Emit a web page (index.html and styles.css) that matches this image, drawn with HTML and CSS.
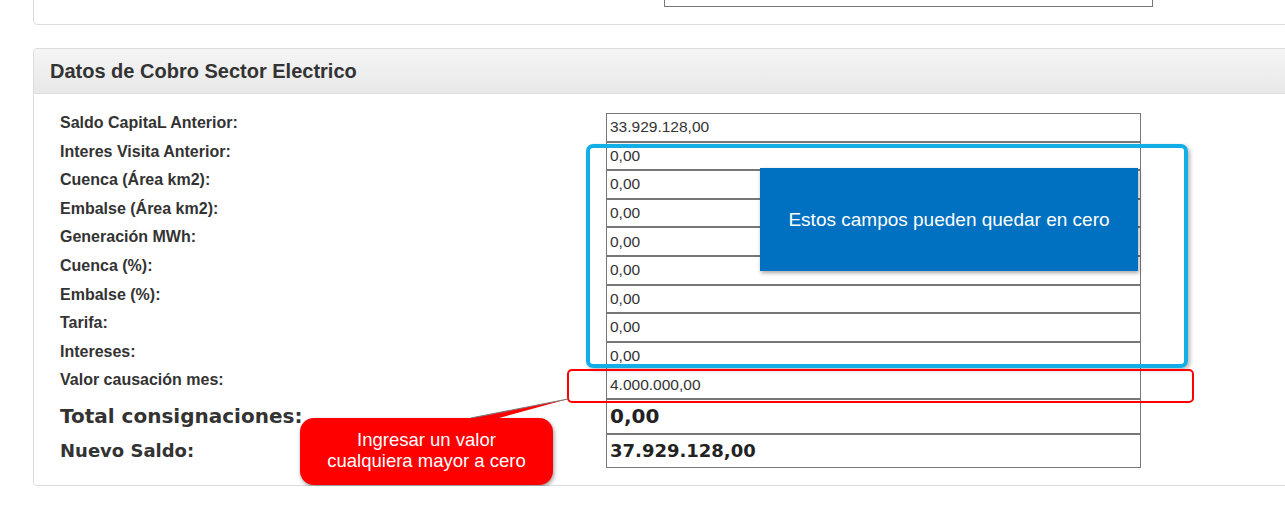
FILE: index.html
```html
<!DOCTYPE html>
<html lang="es">
<head>
    <meta charset="UTF-8">
    <title>Datos de Cobro Sector Electrico</title>
    <link rel="stylesheet" href="styles.css">
</head>
<body>
    <div class="page">
        <!-- panel anterior, cortado arriba -->
        <div class="panel panel-prev">
            <input type="text" class="prev-input">
        </div>

        <div class="panel panel-cobro">
            <div class="panel-heading">Datos de Cobro Sector Electrico</div>
            <div class="panel-body">
                <div class="campos">
                    <label>Saldo CapitaL Anterior:</label>
                    <input type="text" value="33.929.128,00">
                    <label>Interes Visita Anterior:</label>
                    <input type="text" value="0,00">
                    <label>Cuenca (Área km2):</label>
                    <input type="text" value="0,00">
                    <label>Embalse (Área km2):</label>
                    <input type="text" value="0,00">
                    <label>Generación MWh:</label>
                    <input type="text" value="0,00">
                    <label>Cuenca (%):</label>
                    <input type="text" value="0,00">
                    <label>Embalse (%):</label>
                    <input type="text" value="0,00">
                    <label>Tarifa:</label>
                    <input type="text" value="0,00">
                    <label>Intereses:</label>
                    <input type="text" value="0,00">
                    <label>Valor causación mes:</label>
                    <input type="text" value="4.000.000,00">
                    <label class="total total-grande">Total consignaciones:</label>
                    <input type="text" class="total total-consig" value="0,00">
                    <label class="total">Nuevo Saldo:</label>
                    <input type="text" class="total total-saldo" value="37.929.128,00">
                </div>
            </div>

            <!-- anotaciones sobre la captura -->
            <div class="marco-azul"></div>
            <div class="nota-azul">Estos campos pueden quedar en cero</div>
            <div class="marco-rojo"></div>
            <svg class="puntero" width="140" height="30" viewBox="0 0 140 30">
                <polygon points="4,21 32,21 101,2" fill="#ff0000"/>
                <line x1="4" y1="21" x2="101" y2="2" stroke="#7a7a7a" stroke-width="1.2"/>
            </svg>
            <div class="nota-roja">Ingresar un valor<br>cualquiera mayor a cero</div>
        </div>
    </div>
</body>
</html>
```

FILE: styles.css
```css
body {
    margin: 0;
    background-color: #fff;
    font-family: "Liberation Sans", Arial, sans-serif;
    color: #333;
    overflow: hidden;
}
.page {
    padding-left: 33px;
}
.panel {
    background-color: #fff;
    border: 1px solid #ddd;
    border-radius: 4px;
    box-sizing: border-box;
}
.panel-prev {
    height: 41px;
    margin-top: -16px;
    width: 1300px;
    position: relative;
}
.prev-input {
    position: absolute;
    left: 630px;
    top: -10px;
    width: 489px;
    height: 32px;
    border: 1px solid #777;
    box-sizing: border-box;
}
.panel-cobro {
    margin-top: 23px;
    width: 1300px;
    position: relative;
}
.panel-heading {
    height: 45px;
    box-sizing: border-box;
    padding: 0 16px;
    line-height: 45px;
    font-size: 20px;
    font-weight: bold;
    color: #333;
    background: linear-gradient(#f5f5f5, #e8e8e8);
    border-bottom: 1px solid #ddd;
    border-radius: 4px 4px 0 0;
}
.panel-body {
    padding: 19px 0 17px 26px;
}
.campos {
    display: grid;
    grid-template-columns: 546px 535px;
}
.campos label {
    font-size: 16px;
    font-weight: bold;
    line-height: 18px;
    padding-top: 1px;
}
.campos input {
    height: 28.6px;
    box-sizing: border-box;
    border: 1px solid #777;
    padding: 0 3px;
    margin: 0;
    font-family: "Liberation Sans", Arial, sans-serif;
    font-size: 15.5px;
    color: #333;
    background: #fff;
}
.campos label.total {
    font-family: "DejaVu Sans", Verdana, sans-serif;
    font-size: 18px;
    padding-top: 0;
    align-self: center;
}
.campos label.total-grande {
    font-size: 20px;
}
.campos input.total {
    font-family: "DejaVu Sans", Verdana, sans-serif;
    font-weight: bold;
    font-size: 18px;
    color: #222;
}
.total-consig {
    height: 35px !important;
    font-size: 20px !important;
}
.total-saldo {
    height: 34px !important;
}
.marco-azul {
    position: absolute;
    left: 552px;
    top: 95px;
    width: 602px;
    height: 224px;
    box-sizing: border-box;
    border: 4px solid #12aee6;
    border-radius: 7px;
    box-shadow: 2px 2px 4px rgba(0,0,0,0.3);
}
.nota-azul {
    position: absolute;
    left: 726px;
    top: 119px;
    width: 378px;
    height: 103px;
    background-color: #0070c0;
    color: #fff;
    font-size: 19px;
    display: flex;
    align-items: center;
    justify-content: center;
    box-shadow: 1px 2px 4px rgba(0,0,0,0.35);
}
.marco-rojo {
    position: absolute;
    left: 533px;
    top: 320px;
    width: 627px;
    height: 34px;
    box-sizing: border-box;
    border: 2px solid #ff0000;
    border-radius: 5px;
}
.puntero {
    position: absolute;
    left: 433px;
    top: 348px;
}
.nota-roja {
    position: absolute;
    left: 266px;
    top: 369px;
    width: 253px;
    height: 67px;
    box-sizing: border-box;
    padding-top: 11px;
    background-color: #ff0000;
    color: #fff;
    font-size: 18.5px;
    line-height: 21px;
    text-align: center;
    border-radius: 14px;
    box-shadow: 1px 2px 4px rgba(0,0,0,0.4);
}
```
